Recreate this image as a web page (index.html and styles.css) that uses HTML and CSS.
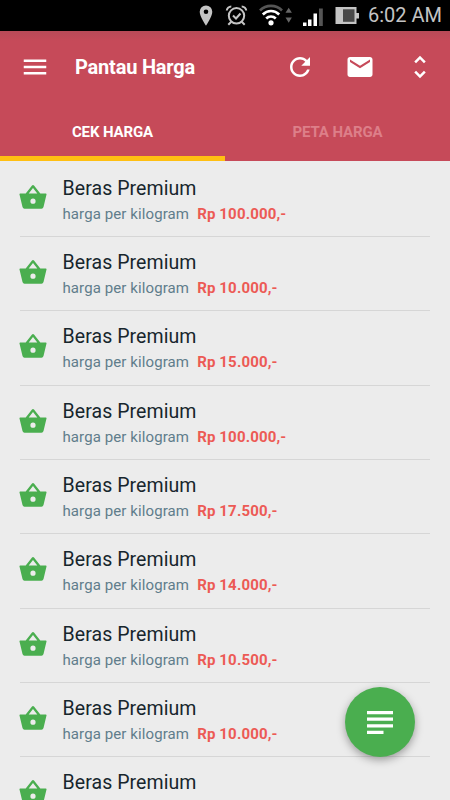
FILE: index.html
```html
<!DOCTYPE html>
<html lang="id">
<head>
<meta charset="utf-8">
<title>Pantau Harga</title>
<link rel="stylesheet" href="styles.css">
</head>
<body>
<div class="screen">
  <div class="status">
    <svg class="status-icons" viewBox="0 0 170 31" width="170" height="31">
      <path fill="#c4c4c4" fill-rule="evenodd" d="M16 5.500a6.300 6.300 0 0 0-6.300 6.300c0 4.700 6.300 14 6.300 14s6.300-9.300 6.300-14A6.300 6.300 0 0 0 16 5.500zm0 4a2.300 2.300 0 1 1 0 4.600 2.300 2.300 0 0 1 0-4.600z"/>
      <g fill="none" stroke="#c4c4c4" stroke-width="2">
        <circle cx="46.500" cy="15.800" r="7.700"/>
        <path d="M36.800 10.500c0-2 2-4 4.500-4M51.700 6.500c2.500 0 4.500 2 4.500 4M41.300 21.800l-3 3M51.700 21.800l3 3M43 15.500l3 3 4.500-5"/>
      </g>
      <g fill="none" stroke="#fff" stroke-width="2.600">
        <path stroke="#555" d="M70 10.500a15.500 15.500 0 0 1 22 0"/>
        <path d="M72.800 14.500a11.500 11.500 0 0 1 16.400 0M76.200 18.500a6.800 6.800 0 0 1 9.600 0"/>
      </g>
      <circle cx="81" cy="22.800" r="2.600" fill="#fff"/>
      <path fill="#666" d="M95.500 12.800l3.200-5 3.200 5zM95.500 17.500h6.400l-3.200 5.200z"/>
      <path fill="#fff" d="M113 22.500h3.500V26H113zM118 19.500h3.500V26H118zM123.500 13.500h3.500V26h-3.500z"/>
      <path fill="#555" d="M129 8.500h3.800V26H129z"/>
      <path fill="#c4c4c4" d="M145.500 7h21v6h2.500v5.500h-2.500V24h-21z"/>
      <path fill="#484848" d="M153 9.300h11.500v12.500H153z"/>
    </svg>
    <span class="clock">6:02 AM</span>
  </div>

  <header class="header">
    <div class="toolbar">
      <svg class="icon" viewBox="0 0 24 24"><path d="M3 18h18v-2H3v2zm0-5h18v-2H3v2zm0-7v2h18V6H3z"/></svg>
      <h1 class="app-title">Pantau Harga</h1>
      <div class="actions">
        <svg class="icon" viewBox="0 0 24 24"><path d="M17.650 6.350C16.200 4.900 14.210 4 12 4c-4.420 0-7.990 3.580-7.990 8s3.570 8 7.990 8c3.730 0 6.840-2.550 7.730-6h-2.080c-.82 2.330-3.040 4-5.650 4-3.310 0-6-2.690-6-6s2.690-6 6-6c1.660 0 3.140.69 4.220 1.780L13 11h7V4l-2.350 2.350z"/></svg>
        <svg class="icon" viewBox="0 0 24 24"><path d="M20 4H4c-1.100 0-1.990.9-1.990 2L2 18c0 1.100.9 2 2 2h16c1.100 0 2-.9 2-2V6c0-1.100-.9-2-2-2zm0 4l-8 5-8-5V6l8 5 8-5v2z"/></svg>
        <svg class="icon" viewBox="0 0 24 24"><path d="M12 5.830L15.170 9l1.410-1.410L12 3 7.410 7.590 8.830 9 12 5.830zm0 12.340L8.830 15l-1.410 1.410L12 21l4.590-4.590L15.170 15 12 18.170z"/></svg>
      </div>
    </div>
    <nav class="tabs">
      <span class="tab active">CEK HARGA</span>
      <span class="tab">PETA HARGA</span>
    </nav>
  </header>

  <svg width="0" height="0" class="defs">
    <symbol id="basket" viewBox="0 0 28 24">
      <path fill-rule="evenodd" d="M1.200 8.500H6.700L12.800.7q1.200-1.200 2.400 0L21.300 8.500h5.500q.9 0 .7 1l-3 12.500q-.5 1.700-2 1.700h-17q-1.500 0-2-1.700l-3-12.500q-.2-1 .7-1zM9.700 8.500h8.600L14 3.100zM14 13.600a2.600 2.600 0 1 0 0 5.200 2.600 2.600 0 0 0 0-5.200z"/>
    </symbol>
  </svg>

  <ul class="list">
    <li class="item"><svg class="basket"><use href="#basket"/></svg><div class="body"><div class="name">Beras Premium</div><div class="detail"><span class="unit">harga per kilogram</span><span class="price">Rp 100.000,-</span></div></div></li>
    <li class="item"><svg class="basket"><use href="#basket"/></svg><div class="body"><div class="name">Beras Premium</div><div class="detail"><span class="unit">harga per kilogram</span><span class="price">Rp 10.000,-</span></div></div></li>
    <li class="item"><svg class="basket"><use href="#basket"/></svg><div class="body"><div class="name">Beras Premium</div><div class="detail"><span class="unit">harga per kilogram</span><span class="price">Rp 15.000,-</span></div></div></li>
    <li class="item"><svg class="basket"><use href="#basket"/></svg><div class="body"><div class="name">Beras Premium</div><div class="detail"><span class="unit">harga per kilogram</span><span class="price">Rp 100.000,-</span></div></div></li>
    <li class="item"><svg class="basket"><use href="#basket"/></svg><div class="body"><div class="name">Beras Premium</div><div class="detail"><span class="unit">harga per kilogram</span><span class="price">Rp 17.500,-</span></div></div></li>
    <li class="item"><svg class="basket"><use href="#basket"/></svg><div class="body"><div class="name">Beras Premium</div><div class="detail"><span class="unit">harga per kilogram</span><span class="price">Rp 14.000,-</span></div></div></li>
    <li class="item"><svg class="basket"><use href="#basket"/></svg><div class="body"><div class="name">Beras Premium</div><div class="detail"><span class="unit">harga per kilogram</span><span class="price">Rp 10.500,-</span></div></div></li>
    <li class="item"><svg class="basket"><use href="#basket"/></svg><div class="body"><div class="name">Beras Premium</div><div class="detail"><span class="unit">harga per kilogram</span><span class="price">Rp 10.000,-</span></div></div></li>
    <li class="item"><svg class="basket"><use href="#basket"/></svg><div class="body"><div class="name">Beras Premium</div></div></li>
  </ul>

  <div class="fab">
    <svg viewBox="0 0 26 23" width="26" height="23"><path d="M0 0h26v3.200H0zM0 6.600h26v3.200H0zM0 13.200h26v3.200H0zM0 19.800h16.500V23H0z"/></svg>
  </div>
</div>
</body>
</html>
```

FILE: styles.css
```css
* { box-sizing: border-box; }
body { margin: 0; font-family: Roboto, sans-serif; }
.screen {
  position: relative;
  width: 450px;
  height: 800px;
  overflow: hidden;
  background: #ececec;
}
.status {
  display: flex;
  align-items: center;
  height: 31px;
  padding-left: 190px;
  background: #000;
}
.status-icons { flex: none; }
.clock {
  margin-left: 8px;
  color: #c4c4c4;
  font-size: 20px;
  line-height: 31px;
  white-space: nowrap;
}
.header {
  display: flex;
  flex-direction: column;
  height: 130px;
  background: linear-gradient(#b84a58, #c64a59 10px);
}
.toolbar {
  display: flex;
  align-items: center;
  height: 71px;
  padding: 0 15px 0 20px;
}
.icon { flex: none; width: 30px; height: 30px; fill: #fff; }
.app-title {
  margin: 0 0 0 25px;
  color: #fff;
  font-size: 20px;
  font-weight: 700;
  line-height: 24px;
  letter-spacing: -.2px;
  white-space: nowrap;
}
.actions { display: flex; gap: 30px; margin-left: auto; }
.tabs { display: flex; flex: 1; }
.tab {
  display: flex;
  flex: 1;
  align-items: center;
  justify-content: center;
  padding-top: 5px;
  border-bottom: 5px solid transparent;
  color: #dd7f89;
  font-size: 15px;
  font-weight: 700;
  letter-spacing: -.12px;
}
.tab.active { border-color: #ffbf12; color: #fff; }
.defs { position: absolute; }
.list { margin: 0; padding: 1.600px 20px 0; list-style: none; }
.item {
  display: flex;
  height: 74.370px;
  border-bottom: 1px solid #d6d6d6;
}
.basket {
  flex: none;
  width: 28px;
  height: 24px;
  margin: 22.900px 0 0 -1.500px;
  fill: #4aae4f;
}
.body { padding: 14px 0 0 16px; white-space: nowrap; }
.name {
  color: #17262d;
  font-size: 19.500px;
  font-weight: 400;
  line-height: 24px;
  letter-spacing: .08px;
}
.detail { display: flex; gap: 8px; margin-top: 3px; font-size: 15px; line-height: 20px; }
.unit { color: #607d8b; letter-spacing: .1px; }
.price { color: #ec5a55; font-weight: 700; letter-spacing: .15px; }
.fab {
  position: absolute;
  top: 687px;
  left: 345px;
  display: flex;
  align-items: center;
  justify-content: center;
  width: 70px;
  height: 70px;
  border-radius: 50%;
  background: #4aae4f;
  box-shadow: 0 3px 8px rgba(0, 0, 0, .35);
}
.fab svg { fill: #fff; }
```
